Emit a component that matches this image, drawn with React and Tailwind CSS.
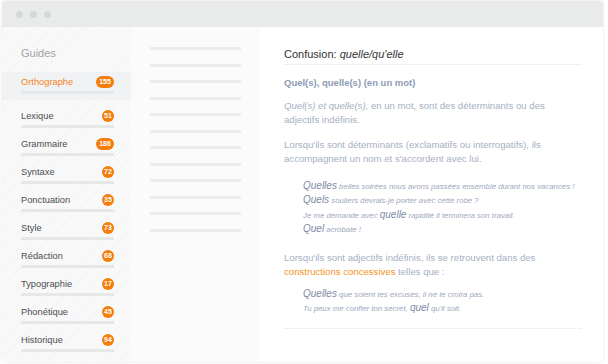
import React from "react";

const guides = [
  { name: "Orthographe", count: 155, active: true },
  { name: "Lexique", count: 51 },
  { name: "Grammaire", count: 186 },
  { name: "Syntaxe", count: 72 },
  { name: "Ponctuation", count: 35 },
  { name: "Style", count: 73 },
  { name: "Rédaction", count: 68 },
  { name: "Typographie", count: 17 },
  { name: "Phonétique", count: 45 },
  { name: "Historique", count: 94 },
];

const Badge = ({ count }) => (
  <span
    className={`h-[12px] ${
      count > 99 ? "w-[18px]" : "w-[12px]"
    } rounded-full bg-[#f47d0c] text-white text-[7px] font-bold leading-[12px] text-center`}
  >
    {count}
  </span>
);

const GuideItem = ({ item }) => (
  <div
    className={`h-[28px] pl-[19px] pr-[17px] pt-[4px] flex flex-col ${
      item.active ? "bg-[#f1f2f4] mb-[6px]" : ""
    }`}
  >
    <div className="h-[12px] flex items-center justify-between">
      <span
        className={`text-[9.3px] leading-[12px] ${
          item.active ? "text-[#f5841f]" : "text-[#4d4d4d]"
        }`}
      >
        {item.name}
      </span>
      <Badge count={item.count} />
    </div>
    <div className="mt-[2.5px] h-[3px] bg-[#e6e7e8]" />
  </div>
);

const Example = ({ children }) => (
  <div className="h-[14.4px] text-[7.8px] leading-[14.4px] italic text-[#9da8be]">{children}</div>
);

const Key = ({ children }) => (
  <span className="text-[10px] leading-none text-[#7d89a4]">{children}</span>
);

export default function App() {
  return (
    <div className="w-[608px] h-[364px] bg-white pt-[1px] pl-[2px] font-['Liberation_Sans',Arial,sans-serif]">
      <div className="w-[601px] h-[361px] rounded-[4px] overflow-hidden flex flex-col shadow-[0_0_3px_rgba(0,0,0,0.12)] bg-[#fbfbfb]">
        {/* title bar */}
        <div className="h-[26px] shrink-0 bg-[#e9eaea] flex items-center gap-[7px] pl-[14px]">
          <span className="w-[7px] h-[7px] rounded-full bg-[#d6d7d7]" />
          <span className="w-[7px] h-[7px] rounded-full bg-[#d6d7d7]" />
          <span className="w-[7px] h-[7px] rounded-full bg-[#d6d7d7]" />
        </div>

        <div className="flex flex-1 min-h-0">
          {/* sidebar */}
          <div className="w-[129px] shrink-0 pt-[19px] bg-[repeating-linear-gradient(135deg,#f3f4f5_0px,#f3f4f5_1px,#fafafa_1px,#fafafa_3px)]">
            <div className="pl-[19px] text-[11px] leading-[14px] text-[#a3a3a3]">Guides</div>
            <div className="mt-[12px] flex flex-col">
              {guides.map((g) => (
                <GuideItem key={g.name} item={g} />
              ))}
            </div>
          </div>

          {/* list of lines */}
          <div className="w-[129px] shrink-0 pl-[19px] pt-[20px] flex flex-col gap-[13.55px]">
            {Array.from({ length: 12 }).map((_, i) => (
              <div key={i} className="w-[91px] h-[3px] bg-[#ebecec]" />
            ))}
          </div>

          {/* article */}
          <div className="flex-1 bg-white rounded-b-[4px] pl-[24px] pr-[21px] pt-[20px]">
            <div className="text-[11px] leading-[14px] text-[#333] pb-[3px] border-b border-[#eef0f3]">
              Confusion: <i>quelle/qu'elle</i>
            </div>
            <div className="mt-[12px] text-[9.5px] leading-[12px] font-bold text-[#8e9bb5]">
              Quel(s), quelle(s) (en un mot)
            </div>
            <div className="mt-[10px] text-[9.6px] leading-[14px] text-[#a6b0c4]">
              <i>Quel(s) et quelle(s),</i> en un mot, sont des déterminants ou des
              adjectifs indéfinis.
            </div>
            <div className="mt-[11px] text-[9.6px] leading-[14px] text-[#a6b0c4]">
              Lorsqu'ils sont déterminants (exclamatifs ou interrogatifs), ils
              accompagnent un nom et s'accordent avec lui.
            </div>
            <div className="mt-[14px] pl-[19px]">
              <Example>
                <Key>Quelles</Key> belles soirées nous avons passées ensemble durant nos vacances !
              </Example>
              <Example>
                <Key>Quels</Key> souliers devrais-je porter avec cette robe ?
              </Example>
              <Example>
                Je me demande avec <Key>quelle</Key> rapidité il terminera son travail.
              </Example>
              <Example>
                <Key>Quel</Key> acrobate !
              </Example>
            </div>
            <div className="mt-[13px] text-[9.6px] leading-[14px] text-[#a6b0c4]">
              Lorsqu'ils sont adjectifs indéfinis, ils se retrouvent dans des{" "}
              <span className="text-[#f7931e]">constructions concessives</span> telles que :
            </div>
            <div className="mt-[9px] pl-[19px]">
              <Example>
                <Key>Quelles</Key> que soient tes excuses, il ne te croira pas.
              </Example>
              <Example>
                Tu peux me confier ton secret, <Key>quel</Key> qu'il soit.
              </Example>
            </div>
            <div className="mt-[12px] border-b border-dotted border-[#dfe4ec]" />
          </div>
        </div>
      </div>
    </div>
  );
}
